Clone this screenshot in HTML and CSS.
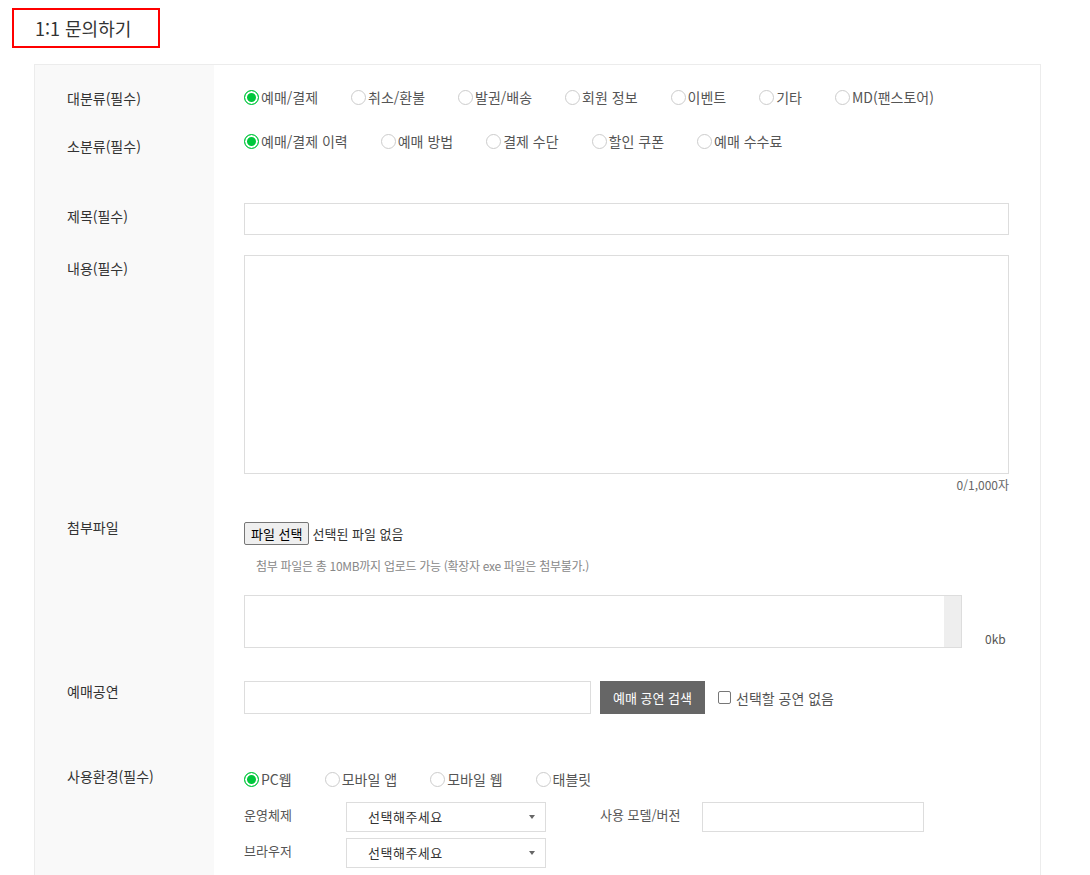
FILE: index.html
```html
<!DOCTYPE html>
<html lang="ko">
<head>
<meta charset="utf-8">
<title>1:1 문의하기</title>
<link rel="stylesheet" href="styles.css">
</head>
<body>
<div class="page">
  <div class="title-box"><h2 class="title">1:1 문의하기</h2></div>

  <div class="form">
    <div class="row row-cat">
      <div class="th">대분류(필수)</div>
      <div class="td">
        <div class="radios">
          <label class="radio on"><span class="dot"></span>예매/결제</label>
          <label class="radio"><span class="dot"></span>취소/환불</label>
          <label class="radio"><span class="dot"></span>발권/배송</label>
          <label class="radio"><span class="dot"></span>회원 정보</label>
          <label class="radio"><span class="dot"></span>이벤트</label>
          <label class="radio"><span class="dot"></span>기타</label>
          <label class="radio"><span class="dot"></span>MD(팬스토어)</label>
        </div>
      </div>
    </div>

    <div class="row row-sub">
      <div class="th">소분류(필수)</div>
      <div class="td">
        <div class="radios">
          <label class="radio on"><span class="dot"></span>예매/결제 이력</label>
          <label class="radio"><span class="dot"></span>예매 방법</label>
          <label class="radio"><span class="dot"></span>결제 수단</label>
          <label class="radio"><span class="dot"></span>할인 쿠폰</label>
          <label class="radio"><span class="dot"></span>예매 수수료</label>
        </div>
      </div>
    </div>

    <div class="row row-subject">
      <div class="th">제목(필수)</div>
      <div class="td">
        <input class="text full" type="text">
      </div>
    </div>

    <div class="row row-content">
      <div class="th">내용(필수)</div>
      <div class="td">
        <textarea class="area"></textarea>
        <div class="counter">0/1,000자</div>
      </div>
    </div>

    <div class="row row-file">
      <div class="th">첨부파일</div>
      <div class="td">
        <div class="file-line">
          <button class="file-btn" type="button">파일 선택</button>
          <span class="file-none">선택된 파일 없음</span>
        </div>
        <p class="note">첨부 파일은 총 10MB까지 업로드 가능 (확장자 exe 파일은 첨부불가.)</p>
        <div class="file-list-row">
          <div class="file-list"><div class="track"></div></div>
          <span class="size">0kb</span>
        </div>
      </div>
    </div>

    <div class="row row-show">
      <div class="th">예매공연</div>
      <div class="td">
        <div class="show-line">
          <input class="text show-input" type="text">
          <button class="search-btn" type="button">예매 공연 검색</button>
          <label class="check"><span class="box"></span>선택할 공연 없음</label>
        </div>
      </div>
    </div>

    <div class="row row-env">
      <div class="th">사용환경(필수)</div>
      <div class="td">
        <div class="radios">
          <label class="radio on"><span class="dot"></span>PC웹</label>
          <label class="radio"><span class="dot"></span>모바일 앱</label>
          <label class="radio"><span class="dot"></span>모바일 웹</label>
          <label class="radio"><span class="dot"></span>태블릿</label>
        </div>
        <div class="env-grid">
          <span class="env-label">운영체제</span>
          <div class="sel"><span>선택해주세요</span></div>
          <span></span>
          <span class="env-label">사용 모델/버전</span>
          <input class="text env-input" type="text">
          <span class="env-label">브라우저</span>
          <div class="sel"><span>선택해주세요</span></div>
        </div>
      </div>
    </div>
  </div>
</div>
</body>
</html>
```

FILE: styles.css
```css
html, body {
  margin: 0;
  padding: 0;
  background: #fff;
}

body {
  font-family: "Noto Sans CJK KR", "Noto Sans", sans-serif;
  color: #333;
}

.page {
  padding: 8px 0 0 12px;
}

.title-box {
  width: 148px;
  height: 40px;
  box-sizing: border-box;
  border: 2px solid #f00;
  display: flex;
  align-items: center;
  padding-left: 21px;
}

.title {
  margin: 0;
  font-size: 18px;
  font-weight: normal;
  line-height: 24px;
  color: #333;
}

.form {
  margin: 16px 0 0 22px;
  width: 1007px;
  box-sizing: border-box;
  border: 1px solid #ececec;
  border-bottom: none;
}

.row {
  display: flex;
}

.th {
  width: 179px;
  flex: none;
  box-sizing: border-box;
  background: #f9f9f9;
  padding-left: 32px;
  font-size: 14px;
  line-height: 20px;
  color: #333;
}

.td {
  flex: 1;
  padding: 0 31px 0 30px;
  min-width: 0;
}

/* per-row vertical rhythm */
.row-cat .th { padding-top: 23px; }
.row-cat .td { padding-top: 22px; padding-bottom: 12px; }

.row-sub .th { padding-top: 17px; }
.row-sub .td { padding-top: 12px; padding-bottom: 32px; }

.row-subject .th { padding-top: 23px; }
.row-subject .td { padding-top: 20px; padding-bottom: 10px; }

.row-content .th { padding-top: 13px; }
.row-content .td { padding-top: 10px; padding-bottom: 10px; }

.row-file .th { padding-top: 14px; }
.row-file .td { padding-top: 19px; padding-bottom: 13px; }

.row-show .th { padding-top: 20px; }
.row-show .td { padding-top: 20px; padding-bottom: 30px; }

.row-env .th { padding-top: 22px; }
.row-env .td { padding-top: 25px; padding-bottom: 20px; }

/* radios */
.radios {
  display: flex;
  flex-wrap: wrap;
}

.radio {
  display: flex;
  align-items: center;
  margin-right: 33px;
  font-size: 14px;
  line-height: 20px;
  color: #555;
  white-space: nowrap;
}

.dot {
  width: 15px;
  height: 15px;
  box-sizing: border-box;
  border: 1px solid #ccc;
  border-radius: 50%;
  background: #fff;
  margin-right: 2px;
  flex: none;
}

.radio.on .dot {
  border-color: #00c73c;
  background: #00c73c;
  box-shadow: inset 0 0 0 2px #fff;
}

/* inputs */
.text {
  display: block;
  box-sizing: border-box;
  border: 1px solid #ddd;
  height: 32px;
  margin: 0;
  padding: 0 8px;
  font-family: inherit;
  background: #fff;
  outline: none;
}

.full {
  width: 765px;
}

.area {
  display: block;
  width: 765px;
  height: 219px;
  box-sizing: border-box;
  border: 1px solid #ddd;
  margin: 0;
  resize: none;
  font-family: inherit;
  outline: none;
}

.counter {
  width: 765px;
  margin-top: 3px;
  text-align: right;
  font-size: 12px;
  line-height: 16px;
  color: #666;
}

/* file */
.file-line {
  display: flex;
  align-items: center;
  height: 23px;
}

.file-btn {
  height: 23px;
  box-sizing: border-box;
  padding: 0 6px;
  border: 1px solid #767676;
  border-radius: 2px;
  background: #efefef;
  font-family: inherit;
  font-size: 13px;
  line-height: 19px;
  color: #000;
}

.file-none {
  margin-left: 3px;
  font-size: 13px;
  color: #333;
}

.note {
  margin: 13px 0 0 12px;
  font-size: 12px;
  line-height: 16px;
  color: #888;
  letter-spacing: -0.3px;
}

.file-list-row {
  display: flex;
  align-items: flex-end;
  margin-top: 21px;
}

.file-list {
  width: 718px;
  height: 53px;
  box-sizing: border-box;
  border: 1px solid #ddd;
  display: flex;
  justify-content: flex-end;
}

.track {
  width: 17px;
  background: #eee;
}

.size {
  margin-left: 23px;
  font-size: 12px;
  line-height: 16px;
  color: #555;
  padding-bottom: 1px;
}

/* show search */
.show-line {
  display: flex;
  align-items: center;
}

.show-input {
  width: 347px;
  height: 33px;
}

.search-btn {
  margin-left: 9px;
  width: 105px;
  height: 33px;
  border: none;
  background: #666;
  color: #fff;
  font-family: inherit;
  font-size: 13px;
  padding: 0;
}

.check {
  display: flex;
  align-items: center;
  margin-left: 13px;
  font-size: 14px;
  line-height: 20px;
  color: #555;
}

.box {
  width: 13px;
  height: 13px;
  box-sizing: border-box;
  border: 1px solid #777;
  border-radius: 2px;
  margin-right: 5px;
}

/* env */
.env-grid {
  display: grid;
  grid-template-columns: 102px 200px 54px 102px 222px;
  row-gap: 6px;
  align-items: center;
  margin-top: 13px;
}

.env-label {
  font-size: 13px;
  color: #555;
  line-height: 20px;
  align-self: start;
  padding-top: 3px;
}

.env-input {
  width: 222px;
  height: 30px;
}

.sel {
  position: relative;
  height: 30px;
  box-sizing: border-box;
  border: 1px solid #ddd;
  padding-left: 21px;
  font-size: 13px;
  line-height: 28px;
  color: #333;
  letter-spacing: 0.5px;
}

.sel::after {
  content: "";
  position: absolute;
  right: 10px;
  top: 12px;
  border-left: 3px solid transparent;
  border-right: 3px solid transparent;
  border-top: 4px solid #666;
}
```
